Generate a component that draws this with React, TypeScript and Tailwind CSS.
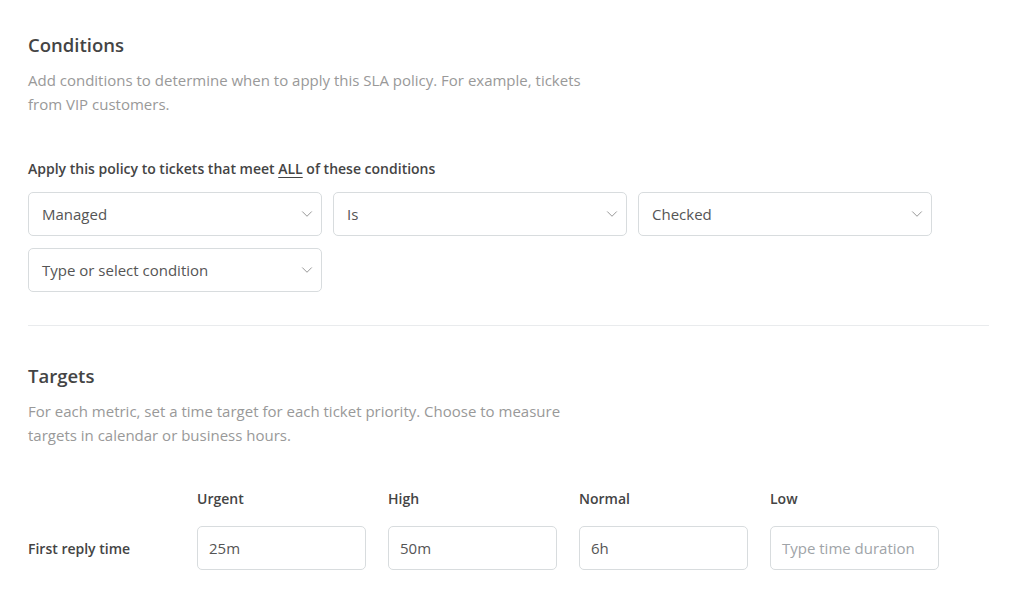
import { ChevronDown } from 'lucide-react';

const font = { fontFamily: '"Open Sans", "Liberation Sans", Arial, sans-serif' };

function Select({ label }: { label: string }) {
  return (
    <div className="flex h-[44px] w-[294px] items-center justify-between rounded-[5px] border border-[#d8dcde] bg-white pl-[13px] pr-[5px]">
      <span className="text-[15px] text-[#555]">{label}</span>
      <ChevronDown className="h-[18px] w-[18px] text-[#8c8c8c]" strokeWidth={1.2} />
    </div>
  );
}

function DurationInput({ value }: { value?: string }) {
  return (
    <div className="flex h-[44px] w-[169px] items-center rounded-[5px] border border-[#d8dcde] bg-white px-[11px]">
      {value ? (
        <span className="text-[15px] text-[#555]">{value}</span>
      ) : (
        <span className="text-[15px] text-[#a0a4a8]">Type time duration</span>
      )}
    </div>
  );
}

export default function App() {
  const priorities = [
    { name: 'Urgent', value: '25m' },
    { name: 'High', value: '50m' },
    { name: 'Normal', value: '6h' },
    { name: 'Low', value: '' },
  ];

  return (
    <div className="min-h-screen bg-white px-[28px] pt-[33px] text-[#444]" style={font}>
      {/* Conditions */}
      <h2 className="text-[18.5px] font-semibold leading-[24px] text-[#444]">Conditions</h2>
      <p className="mt-[11px] w-[590px] text-[15px] leading-[24px] text-[#999]">
        Add conditions to determine when to apply this SLA policy. For example, tickets from VIP customers.
      </p>

      <p className="mt-[43px] text-[14px] font-semibold leading-[20px] text-[#444]">
        Apply this policy to tickets that meet <span className="underline underline-offset-[3px]">ALL</span> of these
        conditions
      </p>
      <div className="mt-[13px] flex flex-col gap-[12px]">
        <div className="flex gap-[11px]">
          <Select label="Managed" />
          <Select label="Is" />
          <Select label="Checked" />
        </div>
        <div className="flex">
          <Select label="Type or select condition" />
        </div>
      </div>

      <div className="mt-[33px] h-px w-[961px] bg-[#e9ebed]" />

      {/* Targets */}
      <h2 className="mt-[38px] text-[18.5px] font-semibold leading-[24px] text-[#444]">Targets</h2>
      <p className="mt-[11px] w-[580px] text-[15px] leading-[24px] text-[#999]">
        For each metric, set a time target for each ticket priority. Choose to measure targets in calendar or business
        hours.
      </p>

      <div className="mt-[42px] grid grid-cols-[147px_169px_169px_169px_169px] gap-x-[22px]">
        <div />
        {priorities.map((p) => (
          <div key={p.name} className="text-[14px] font-semibold leading-[20px] text-[#444]">
            {p.name}
          </div>
        ))}
      </div>
      <div className="mt-[17px] grid grid-cols-[147px_169px_169px_169px_169px] items-center gap-x-[22px]">
        <div className="text-[14px] font-semibold text-[#444]">First reply time</div>
        {priorities.map((p) => (
          <DurationInput key={p.name} value={p.value || undefined} />
        ))}
      </div>
    </div>
  );
}
